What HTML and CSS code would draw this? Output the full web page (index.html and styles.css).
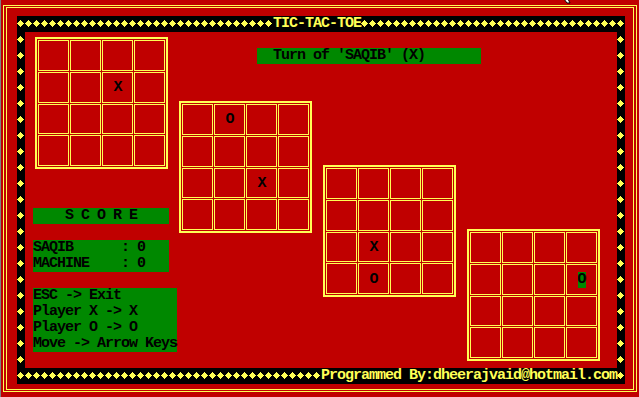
FILE: index.html
```html
<!DOCTYPE html>
<html lang="en">
<head>
    <meta charset="UTF-8">
    <title>TIC-TAC-TOE</title>
    <link rel="stylesheet" href="styles.css">
</head>
<body>
<div class="screen">
    <svg class="pointer" width="12" height="5" viewBox="0 0 12 5">
        <path d="M1 0 L4 4 L7 4 L5 0 Z" fill="#fff" stroke="#000" stroke-width="1"/>
    </svg>
    <div class="line-outer">
        <div class="line-inner">
            <div class="band">
                <div class="band-row"><span class="title">TIC-TAC-TOE</span></div>
                <div class="band-mid">
                    <div class="band-side"></div>
                    <div class="field">
                        <div class="side">
                            <div class="board b1">
                                <div class="cell"></div><div class="cell"></div><div class="cell"></div><div class="cell"></div>
                                <div class="cell"></div><div class="cell"></div><div class="cell">X</div><div class="cell"></div>
                                <div class="cell"></div><div class="cell"></div><div class="cell"></div><div class="cell"></div>
                                <div class="cell"></div><div class="cell"></div><div class="cell"></div><div class="cell"></div>
                            </div>
                            <div class="box score-title">S C O R E</div>
                            <div class="box scores">SAQIB      : 0
MACHINE    : 0</div>
                            <div class="box help">ESC -&gt; Exit
Player X -&gt; X
Player O -&gt; O
Move -&gt; Arrow Keys</div>
                        </div>
                        <div class="play">
                            <div class="box turn">Turn of 'SAQIB' (X)</div>
                            <div class="boards">
                                <div class="board b2">
                                    <div class="cell"></div><div class="cell">O</div><div class="cell"></div><div class="cell"></div>
                                    <div class="cell"></div><div class="cell"></div><div class="cell"></div><div class="cell"></div>
                                    <div class="cell"></div><div class="cell"></div><div class="cell">X</div><div class="cell"></div>
                                    <div class="cell"></div><div class="cell"></div><div class="cell"></div><div class="cell"></div>
                                </div>
                                <div class="board b3">
                                    <div class="cell"></div><div class="cell"></div><div class="cell"></div><div class="cell"></div>
                                    <div class="cell"></div><div class="cell"></div><div class="cell"></div><div class="cell"></div>
                                    <div class="cell"></div><div class="cell">X</div><div class="cell"></div><div class="cell"></div>
                                    <div class="cell"></div><div class="cell">O</div><div class="cell"></div><div class="cell"></div>
                                </div>
                                <div class="board b4">
                                    <div class="cell"></div><div class="cell"></div><div class="cell"></div><div class="cell"></div>
                                    <div class="cell"></div><div class="cell"></div><div class="cell"></div><div class="cell"><span class="cursor">O</span></div>
                                    <div class="cell"></div><div class="cell"></div><div class="cell"></div><div class="cell"></div>
                                    <div class="cell"></div><div class="cell"></div><div class="cell"></div><div class="cell"></div>
                                </div>
                            </div>
                        </div>
                    </div>
                    <div class="band-side"></div>
                </div>
                <div class="band-row"><span class="credit">Programmed By:dheerajvaid@hotmail.com</span></div>
            </div>
        </div>
    </div>
</div>
</body>
</html>
```

FILE: styles.css
```css
body {
    margin: 0;
    background-color: #808080;
}
.screen {
    position: relative;
    margin-left: 1px;
    width: 638px;
    height: 397px;
    box-sizing: border-box;
    padding: 5px 0 0 2px;
    background-color: #c00000;
    font-family: "Liberation Mono", "DejaVu Sans Mono", monospace;
    font-size: 15px;
    font-weight: bold;
    letter-spacing: -1px;
    line-height: 16px;
    color: #000;
}
.pointer {
    position: absolute;
    top: -1px;
    left: 562px;
}
.line-outer {
    width: fit-content;
    border: 1px solid #ffff55;
    padding: 1px 2px;
}
.line-inner {
    border: 1px solid #ffff55;
    padding: 8px 8px 5px 10px;
}
.band {
    width: 608px;
    background-color: #000;
}
.band-row, .band-side {
    background-color: #000;
    background-image: url("data:image/svg+xml,%3Csvg xmlns='http://www.w3.org/2000/svg' width='8' height='16'%3E%3Cpath d='M3 4h1v1h1v1h1v1h1v1h-1v1h-1v1h-1v1h-1v-1h-1v-1h-1v-1h-1v-1h1v-1h1v-1h1z' fill='%23ffff55'/%3E%3C/svg%3E");
}
.band-row {
    display: flex;
    height: 16px;
    background-repeat: repeat-x;
}
.band-side {
    width: 8px;
    background-repeat: repeat-y;
}
.title, .credit {
    background-color: #000;
    color: #ffff55;
    white-space: pre;
}
.title {
    margin-left: 256px;
}
.credit {
    margin-left: 304px;
}
.band-mid {
    display: flex;
    height: 336px;
}
.field {
    flex: 1;
    display: flex;
    align-items: flex-start;
    padding: 5px 0 0 8px;
    background-color: #c00000;
}
.side {
    width: 144px;
    flex: none;
}
.box {
    background-color: #008800;
    white-space: pre;
}
.score-title {
    width: 136px;
    margin-top: 39px;
    text-align: center;
}
.scores {
    width: 136px;
    margin-top: 16px;
}
.help {
    width: 144px;
    margin-top: 16px;
}
.play {
    display: flex;
    flex-direction: column;
}
.turn {
    width: 224px;
    box-sizing: border-box;
    margin: 11px 0 0 80px;
    padding-left: 16px;
}
.boards {
    display: flex;
    align-items: flex-start;
    margin-top: 37px;
}
.board {
    flex: none;
    width: 133px;
    height: 132px;
    box-sizing: border-box;
    border: 2px solid #ffff55;
    padding: 1px;
    display: grid;
    grid-template-columns: repeat(4, 31px);
    grid-template-rows: repeat(4, 1fr);
    gap: 1px;
}
.b1, .b2 {
    margin-left: 2px;
}
.b3 {
    margin-left: 11px;
    margin-top: 64px;
}
.b4 {
    margin-left: 11px;
    margin-top: 128px;
}
.cell {
    border: 1px solid #ffff55;
    box-sizing: border-box;
    display: flex;
    align-items: center;
    justify-content: center;
    padding-top: 2px;
}
.cursor {
    display: inline-block;
    width: 8px;
    height: 16px;
    background-color: #008800;
}
```
